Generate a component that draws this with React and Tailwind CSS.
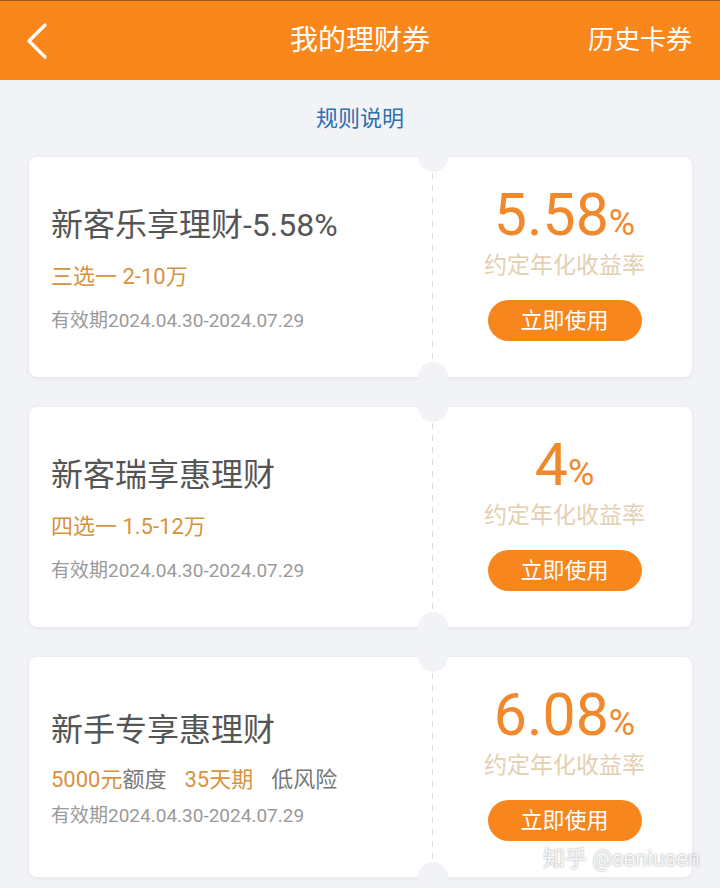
import React from "react";

const coupons = [
  {
    id: 1,
    title: "新客乐享理财-5.58%",
    rate: "5.58",
    sub: [{ text: "三选一 2-10万", hot: true }],
  },
  {
    id: 2,
    title: "新客瑞享惠理财",
    rate: "4",
    sub: [{ text: "四选一 1.5-12万", hot: true }],
  },
  {
    id: 3,
    title: "新手专享惠理财",
    rate: "6.08",
    compact: true,
    sub: [
      { text: "5000元", hot: true },
      { text: "额度", hot: false },
      { text: "35天期", hot: true, gap: true },
      { text: "低风险", hot: false, gap: true },
    ],
  },
];

const Coupon = ({ c }) => (
  <div className="relative flex h-[220px] rounded-[8px] bg-white shadow-[0_1px_5px_rgba(0,0,0,0.07)]">
    {/* Left */}
    <div
      className={`flex w-[403px] flex-col pl-[22px] ${
        c.compact ? "pt-[54px]" : "pt-[49px]"
      }`}
    >
      <div className="h-[38px] text-[32px] leading-[38px] text-[#555]">
        {c.title}
      </div>
      <div
        className={`flex h-[30px] text-[22px] leading-[30px] ${
          c.compact ? "mt-[16px]" : "mt-[18px]"
        }`}
      >
        {c.sub.map((s, i) => (
          <span
            key={i}
            className={`${s.hot ? "text-[#d8923e]" : "text-[#777]"} ${
              s.gap ? "ml-[18px]" : ""
            }`}
          >
            {s.text}
          </span>
        ))}
      </div>
      <div
        className={`h-[26px] text-[19px] leading-[26px] text-[#9a9a9a] ${
          c.compact ? "mt-[8px]" : "mt-[16px]"
        }`}
      >
        有效期2024.04.30-2024.07.29
      </div>
    </div>

    {/* Dashed divider */}
    <div className="my-[16px] w-px bg-[repeating-linear-gradient(to_bottom,#dedede_0_6px,transparent_6px_12px)]" />

    {/* Right */}
    <div className="flex flex-1 flex-col items-center pt-[27px] pl-[4px]">
      <div className="flex h-[62px] items-baseline text-[#f0892b]">
        <span className="text-[59px] leading-[62px]">{c.rate}</span>
        <span className="text-[36px] leading-[62px]">%</span>
      </div>
      <div className="mt-[6px] h-[28px] text-[23px] leading-[28px] text-[#e4d0b1]">
        约定年化收益率
      </div>
      <button className="mt-[20px] flex h-[41px] w-[154px] items-center justify-center rounded-full bg-[#f7861d] text-[22px] text-white">
        立即使用
      </button>
    </div>

    {/* Notches */}
    <div className="absolute left-[389px] top-[-15px] h-[30px] w-[30px] rounded-full bg-[#f2f3f7]" />
    <div className="absolute bottom-[-15px] left-[389px] h-[30px] w-[30px] rounded-full bg-[#f2f3f7]" />
  </div>
);

export default function App() {
  return (
    <div className="relative h-[888px] w-[720px] overflow-hidden bg-[#f2f3f7] font-['Roboto','Noto_Sans_CJK_SC',sans-serif]">
      {/* Header */}
      <div className="flex h-[80px] items-center border-t border-[#9a5a1e] bg-[#fa871b] px-[28px] text-white">
        <div className="w-[120px]">
          <svg width="24" height="38" viewBox="0 0 24 38" className="-ml-[2px]">
            <path
              d="M19 3 L3 19 L19 35"
              fill="none"
              stroke="white"
              strokeWidth="3.2"
              strokeLinecap="round"
              strokeLinejoin="round"
            />
          </svg>
        </div>
        <div className="flex-1 text-center text-[28px]">我的理财券</div>
        <div className="w-[120px] text-right text-[26px]">历史卡券</div>
      </div>

      {/* Rules */}
      <div className="flex h-[77px] items-center justify-center text-[22px] text-[#2d6fb0]">
        规则说明
      </div>

      {/* Coupons */}
      <div className="flex flex-col gap-[30px] pl-[29px] pr-[28px]">
        {coupons.map((c) => (
          <Coupon key={c.id} c={c} />
        ))}
      </div>

      {/* Watermark */}
      <div className="absolute right-[20px] top-[842px] text-[22px] text-white/90 [text-shadow:0_0_2px_rgba(0,0,0,0.45)]">
        知乎 @seniusen
      </div>
    </div>
  );
}
